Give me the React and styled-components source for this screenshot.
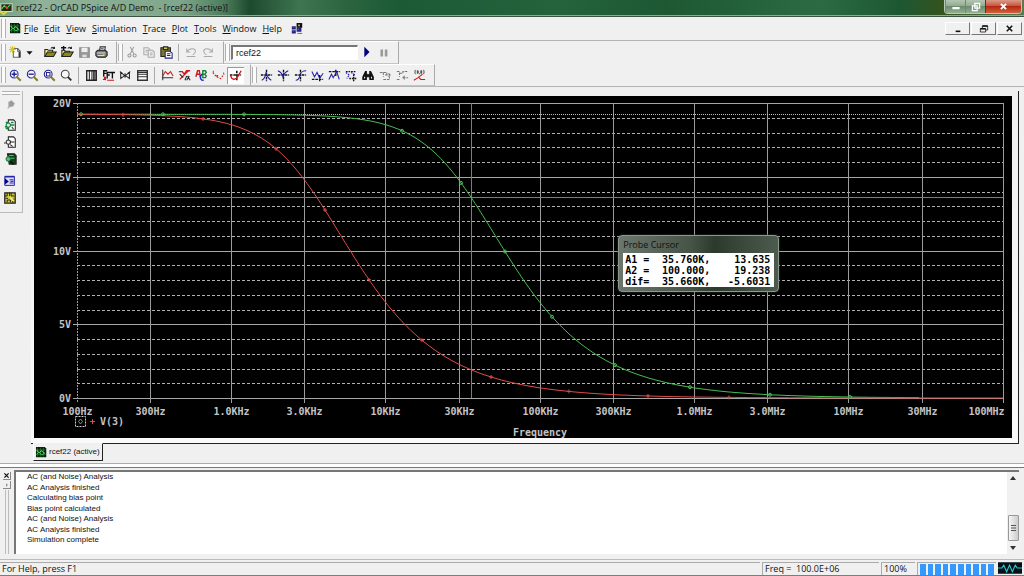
// DEPENDENCIES
import React, { Fragment } from 'react';
import styled, { createGlobalStyle } from 'styled-components';

// GLOBAL
const GlobalStyle = createGlobalStyle`
	* {
		box-sizing: border-box;
	}
	body {
		margin: 0;
		background: #f0f0f0;
		color: #111;
		font-family: "Open Sans", "Noto Sans", sans-serif;
		font-size: 9px;
		line-height: 12px;
	}
	button, input {
		font: inherit;
		color: inherit;
	}
	button {
		padding: 0;
		border: 0;
		background: none;
	}
	ul {
		margin: 0;
		padding: 0;
		list-style: none;
	}
`

// STYLED COMPONENTS
const Window = styled.div`
	display: flex;
	flex-direction: column;
	min-height: 100vh;
	background: #f0f0f0;
`

const TitleBar = styled.header`
	display: flex;
	align-items: center;
	height: 17px;
	border-bottom: 1px solid #3d5143;
	box-shadow: inset 0 -1px 0 #8cab93;
	background: linear-gradient(90deg, #76a183 0, #8fb39a 40px, #7fa78b 180px, #4c7c5c 225px, #1d4a2e 250px, #3f7550 300px, #2b6540 345px, #1b5a34 400px, #24633c 55%, #1d5833 65%, #2b6b43 80%, #1d5732 88%, #35531f 92%, #577a52 100%);
`

const Title = styled.h1`
	flex: 1;
	display: flex;
	align-items: center;
	gap: 3px;
	margin: 0;
	font-size: 9px;
	font-weight: 400;
	line-height: 14px;
	white-space: pre;
`

const WindowButtons = styled.div`
	display: flex;
	align-self: flex-start;
	height: 14px;
	margin-right: 2px;
	border: 1px solid #b9c9b9;
	border-top: 0;
	border-radius: 0 0 4px 4px;
	overflow: hidden;
`

const WindowButton = styled.button`
	display: flex;
	align-items: center;
	justify-content: center;
	width: ${props => props.$close ? 36 : 20}px;
	border-left: 1px solid ${props => props.$close ? '#6e2a1c' : '#6f8a71'};
	background: ${props => props.$close
		? 'linear-gradient(#d99a8a, #c8563c 45%, #b32a10 50%, #d2603f)'
		: 'linear-gradient(#b4c6b2, #93ab92 45%, #6c8b6d 50%, #93ae90)'};
`

const MenuBar = styled.nav`
	display: flex;
	align-items: center;
	gap: 3px;
	height: 24px;
	padding: 0 2px 0 0;
	border-bottom: 1px solid #b4b4b4;
`

const MenuItems = styled.div`
	display: flex;
	gap: 6px;
	margin-right: 6px;
`

const MenuItem = styled.button`
	font-size: 9px;
	line-height: 14px;
	&::first-letter {
		text-decoration: underline;
	}
`

const ChildButtons = styled.div`
	display: flex;
	gap: 1px;
	margin-left: auto;
`

const ChildButton = styled.button`
	display: flex;
	align-items: center;
	justify-content: center;
	width: 25px;
	height: 13px;
	border: 1px solid #fff;
	border-right-color: #777;
	border-bottom-color: #777;
`

const ToolRow = styled.div`
	display: flex;
	height: 23px;
	&:last-of-type {
		border-bottom: 1px solid #b4b4b4;
	}
`

const ToolGroup = styled.div`
	display: flex;
	align-items: center;
	padding-right: 6px;
	border-right: 1px solid #aaa;
	border-bottom: 1px solid #c4c4c4;
	border-top: 1px solid #fff;
`

const Grip = styled.span`
	flex: none;
	align-self: ${props => props.$wide ? 'auto' : 'stretch'};
	width: ${props => props.$wide ? 'auto' : '5px'};
	height: ${props => props.$wide ? '4px' : 'auto'};
	margin: ${props => props.$wide ? '0 2px 1px' : '2px 1px'};
	border: 1px solid #b0b0b0;
	border-width: ${props => props.$wide ? '1px 0' : '0 1px'};
	background: #fbfbfb;
`

const Divider = styled.span`
	flex: none;
	width: 1px;
	height: ${props => props.$blank ? 0 : 17}px;
	margin: 0 4px 0 3px;
	background: #aaa;
`

const ToolButton = styled.button`
	display: flex;
	align-items: center;
	justify-content: center;
	width: ${props => props.$narrow ? 10 : 17}px;
	height: 17px;
	background: ${props => props.$pressed ? '#fff' : 'none'};
	box-shadow: ${props => props.$pressed ? 'inset 1px 1px 0 #999' : 'none'};
`

const Svg = styled.svg`
	display: block;
	flex: none;
	fill: none;
	stroke-width: 1.2;
	overflow: visible;
`

const NameInput = styled.input`
	width: 127px;
	height: 15px;
	padding: 0 3px;
	border: 1px solid #fff;
	border-top: 2px solid #777;
	border-left: 2px solid #777;
	background: #fff;
	font: 9px/12px "Liberation Sans", sans-serif;
	outline: 0;
`

const Workspace = styled.main`
	display: flex;
	align-items: flex-start;
	gap: 8px;
	padding: 4px 5px 0 0;
`

const SideBar = styled.div`
	display: flex;
	flex-direction: column;
	align-items: stretch;
	flex: none;
	width: 23px;
	height: 122px;
	border-right: 1px solid #bbb;
	border-bottom: 1px solid #bbb;
	& > button {
		width: 20px;
		height: 17px;
	}
	& > .gap {
		margin-top: 4px;
	}
`

const Document = styled.section`
	flex: 1;
	min-width: 0;
`

const PlotFrame = styled.div`
	position: relative;
	padding: 5px 6px 5px 3px;
	border-right: 1px solid #222;
	border-bottom: 1px solid #222;
	background: linear-gradient(#f0f0f0, #fafafa);
`

const Chart = styled.svg`
	display: block;
	width: 100%;
	background: #000;
	fill: none;
	& text {
		fill: #c4c4c4;
		font: bold 10px "DejaVu Sans Mono", "Liberation Mono", monospace;
	}
`

const ProbeWindow = styled.aside`
	position: absolute;
	left: 59.5%;
	top: 144px;
	padding: 0 4px 4px;
	border: 1px solid #8b988c;
	border-radius: 4px;
	background: linear-gradient(90deg, #6c766d, #465347 45%, #2c3a2e 60%, #4d5a4e);
	box-shadow: 0 0 2px #444;
`

const ProbeTitle = styled.h2`
	margin: 0;
	color: #0c120c;
	font-size: 9px;
	font-weight: 400;
	line-height: 17px;
`

const ProbeTable = styled.table`
	width: 151px;
	padding-top: 1px;
	border-spacing: 0;
	table-layout: fixed;
	background: #fff;
	color: #000;
	font: bold 10px/11px "DejaVu Sans Mono", "Liberation Mono", monospace;
	& th, & td {
		padding: 0 0 0 2px;
		font-weight: 700;
		text-align: left;
		white-space: pre;
	}
	& td {
		text-align: right;
	}
	& td:last-child {
		width: 64px;
		padding-right: 4px;
	}
	& th {
		width: 30px;
	}
`

const DocTab = styled.button`
	display: flex;
	align-items: center;
	gap: 2px;
	height: 18px;
	margin-left: 2px;
	margin-top: -1px;
	position: relative;
	padding: 0 2px;
	border: 1px solid #222;
	border-top-color: #f0f0f0;
	border-left-color: #fff;
	background: #f0f0f0;
	font: 8px/12px "Liberation Sans", sans-serif;
`

const OutputPane = styled.section`
	display: flex;
	flex: 1;
	margin-top: 2px;
	padding: 6px 5px 5px 0;
	border-top: 1px solid #aaa;
	border-bottom: 1px solid #bbb;
	background: linear-gradient(#fff 3px, #777 3px, #777 4px, #f0f0f0 4px);
`

const OutputHandle = styled.div`
	display: flex;
	flex-direction: column;
	align-items: center;
	gap: 1px;
	width: 14px;
	padding-top: 2px;
	& > button {
		display: flex;
		align-items: center;
		justify-content: center;
		width: 8px;
		height: 8px;
		border-right: 1px solid #888;
		border-bottom: 1px solid #888;
	}
	& > span {
		flex: 1;
		width: 4px;
		border: 1px solid #bbb;
		border-width: 0 1px;
	}
`

const LogList = styled.ul`
	display: flex;
	flex: 1;
	flex-direction: column;
	justify-content: space-between;
	padding: 0 11px 9px;
	border-top: 2px solid #777;
	border-left: 2px solid #777;
	background: #fff;
	font: 8px/10px "Liberation Sans", sans-serif;
`

const ScrollBar = styled.div`
	display: flex;
	flex-direction: column;
	align-items: center;
	width: 12px;
	padding: 4px 0;
	border-top: 2px solid #777;
	background: #f1f1f1;
`

const Thumb = styled.span`
	display: flex;
	align-items: center;
	justify-content: center;
	width: 11px;
	height: 26px;
	margin: auto 0 5px;
	border: 1px solid #999;
	border-radius: 1px;
	background: linear-gradient(90deg, #f5f5f5, #ccc);
`

const StatusBar = styled.footer`
	display: flex;
	align-items: stretch;
	gap: 2px;
	height: 16px;
	padding: 2px 2px 0 0;
	border-bottom: 1px solid #6d8571;
`

const StatusCell = styled.span`
	flex: ${props => props.$width ? 'none' : 1};
	width: ${props => props.$width ? props.$width + 'px' : 'auto'};
	padding-left: 2px;
	border-top: 1px solid #aaa;
	border-left: ${props => props.$width ? '1px solid #aaa' : 0};
	line-height: 12px;
	white-space: pre;
`

const Progress = styled.div`
	display: flex;
	flex: none;
	gap: 2px;
	width: 79px;
	padding: 1px 2px 0;
	border-top: 1px solid #aaa;
	border-left: 1px solid #aaa;
`

const Block = styled.span`
	flex: 1;
	background: #3399ff;
`

// ICONS
const traceTile = (
	<Fragment>
		<path d="M0 0h12l2 2v12H0z" fill="#061f0c" />
		<path d="M2 1v12M6 1v12M10 1v12M0 4h13M0 10h13" stroke="#147a30" />
		<path d="M1 4l3 4 4-3 4 4" stroke="#e4dc28" />
		<path d="M1 10l3-3 4 4 4-3" stroke="#39d353" />
	</Fragment>
)

const magnifier = <path d="M8.5 8.5l5 5" stroke="#8a7a1c" strokeWidth="2.4" />

const axes = <path d="M1 7h13M7.500 1v13" stroke="#111" strokeWidth="1.600" strokeDasharray="3 1" />

const icons = {
	app: (
		<Fragment>
			<path d="M1 2h13v9H1z" fill="#1b2b16" stroke="#d9d9b8" />
			<path d="M2 8l3-4 3 3 4-4" stroke="#4fe25e" />
			<path d="M0 11l4 3 4-3" stroke="#e8d832" strokeWidth="2" />
			<path d="M6 5l3 3" stroke="#e23b2a" strokeWidth="2" />
		</Fragment>
	),
	trace: traceTile,
	layout: (
		<Fragment>
			<path d="M1 4h5v4H1zM1 9h5v4H1zM7 6h6v5H7z" fill="#24247e" />
			<path d="M7 0h7v6H7z" fill="#111" />
			<path d="M9 2h2v2H9z" fill="#d8c83a" />
			<path d="M2 5h2M2 10h2M8 8h2M8 13h6" stroke="#5a60b8" />
		</Fragment>
	),
	newDoc: (
		<Fragment>
			<path d="M5 3h5l3 3v7H5z" fill="#fff" stroke="#666" />
			<path d="M10 3v3h3" stroke="#555" />
			<path d="M4 0v8M0 4h8M1 1l6 6M7 1L1 7" stroke="#d8c81c" />
			<path d="M12 7v6" stroke="#333" strokeWidth="2" />
		</Fragment>
	),
	caret: <path d="M4 6h7l-3.500 4z" fill="#111" />,
	open: (
		<Fragment>
			<path d="M1 12V4h3l1 1h5v2" fill="#f5ec7a" stroke="#222" />
			<path d="M1 12l3-5h10l-3 5z" fill="#8a8a12" stroke="#222" />
			<path d="M8 3c1-2 3-2 4 0M12 1v2h-2" stroke="#222" />
		</Fragment>
	),
	append: (
		<Fragment>
			<path d="M1 12V5h3l1 1h5v1" fill="#f5ec7a" stroke="#222" />
			<path d="M1 12l3-5h10l-3 5z" fill="#8a8a12" stroke="#222" />
			<path d="M3 0v5M0 2h6" stroke="#111" strokeWidth="1.600" />
			<path d="M8 3c1-2 3-2 4 0M12 1v2h-2" stroke="#222" />
		</Fragment>
	),
	save: (
		<Fragment>
			<path d="M2 2h11v11H2z" fill="#999" stroke="#888" />
			<path d="M4 2h7v5H4z" fill="#eee" />
			<path d="M5 10h5v3H5z" fill="#ddd" />
		</Fragment>
	),
	print: (
		<Fragment>
			<path d="M5 6l1-5h6l-1 5z" fill="#fff" stroke="#333" />
			<path d="M6 3h4M6 5h4" stroke="#777" />
			<path d="M1 7l2-2h9l2 2v4l-2 2H3l-2-2z" fill="#777" stroke="#222" />
			<path d="M2 8h10M3 11h8" stroke="#ddd" />
			<path d="M9 10h2" stroke="#d6c71c" />
		</Fragment>
	),
	cut: (
		<Fragment>
			<path d="M5 1l4 8M9 1L5 9" stroke="#999" />
			<circle cx="4" cy="11" r="1.800" stroke="#999" />
			<circle cx="10" cy="11" r="1.800" stroke="#999" />
		</Fragment>
	),
	copy: (
		<Fragment>
			<path d="M1 2h5l2 2v6H1z" fill="#eee" stroke="#aaa" />
			<path d="M6 5h5l2 2v6H6z" fill="#eee" stroke="#aaa" />
			<path d="M3 5h3M3 7h2M8 8h3M8 10h3" stroke="#aaa" />
		</Fragment>
	),
	paste: (
		<Fragment>
			<path d="M1 2h11v10H1z" fill="#77762a" stroke="#222" />
			<path d="M4 1h5v3H4z" fill="#d9d05a" stroke="#222" />
			<path d="M6 6h5l3 2v6H6z" fill="#fff" stroke="#22227c" />
			<path d="M8 9h4M8 11h4" stroke="#22227c" />
		</Fragment>
	),
	undo: <path d="M2 3v4h4M2 7c3-5 10-5 10-1 0 2-1 3-3 4M2 12h10" stroke="#aaa" />,
	redo: <path d="M12 3v4H8M12 7C9 2 2 2 2 6c0 2 1 3 3 4M2 12h10" stroke="#aaa" />,
	run: <path d="M5 1l6 6-6 6z" fill="#00007f" />,
	pause: <path d="M4 4h3v8H4zM9 4h3v8H9z" fill="#9a9a9a" />,
	zoomIn: (
		<Fragment>
			<circle cx="6" cy="6" r="4.500" stroke="#24248c" fill="#f5f5ff" />
			<path d="M3 6h6M6 3v6" stroke="#24248c" strokeWidth="1.600" />
			{magnifier}
		</Fragment>
	),
	zoomOut: (
		<Fragment>
			<circle cx="6" cy="6" r="4.500" stroke="#24248c" fill="#f5f5ff" />
			<path d="M3 6h6" stroke="#24248c" strokeWidth="1.600" />
			{magnifier}
		</Fragment>
	),
	zoomArea: (
		<Fragment>
			<circle cx="6" cy="6" r="4.500" stroke="#24248c" fill="#f5f5ff" />
			<path d="M4 4h4v4H4z" stroke="#24248c" />
			{magnifier}
		</Fragment>
	),
	zoomFit: (
		<Fragment>
			<circle cx="6" cy="6" r="4.500" stroke="#444" fill="#f8f8f8" />
			<path d="M9 9l4 4" stroke="#222" strokeWidth="2" />
		</Fragment>
	),
	logX: (
		<Fragment>
			<path d="M2 2h11v11H2z" fill="#fff" stroke="#222" strokeWidth="1.600" />
			<path d="M5 2v11M8 2v11M10 2v11M11.500 2v11" stroke="#222" />
		</Fragment>
	),
	fourier: (
		<Fragment>
			<path d="M2 9V2h4M2 5h3M6 11V4h4M6 7h3M9 4h6M12 4v7" stroke="#111" strokeWidth="1.600" />
			<path d="M1 12h2V9M4 13V9M6 13h8" stroke="#d01818" strokeWidth="1.400" />
		</Fragment>
	),
	performance: (
		<Fragment>
			<path d="M2 4v7l5-4 5 4V4L7 8z" stroke="#222" />
			<path d="M1 3l3 2M13 3l-3 2M7 5v5" stroke="#222" />
		</Fragment>
	),
	logY: (
		<Fragment>
			<path d="M2 2h11v11H2z" fill="#fff" stroke="#333" strokeWidth="1.600" />
			<path d="M2 4h11M2 6h11M2 9h11" stroke="#333" />
		</Fragment>
	),
	addTrace: (
		<Fragment>
			<path d="M2 1v12M1 10h13" stroke="#333" />
			<path d="M2 8l3-5 3 3 3-3 3 5" stroke="#d01818" />
		</Fragment>
	),
	evalGoal: (
		<Fragment>
			<path d="M1 3h4l2 3 3-4h4M2 12l10-10" stroke="#d01818" strokeWidth="1.500" />
			<path d="M2 6l4 4M8 13l2-5M11 8l3 5M13 8l-3 5" stroke="#222" />
		</Fragment>
	),
	label: (
		<Fragment>
			<path d="M1 9l2-7h2l1 7M2 6h4" stroke="#d01818" strokeWidth="1.600" />
			<path d="M10 6c-5-1-5 8 0 7" stroke="#1c2fc8" strokeWidth="1.800" />
			<path d="M9 2h3l1 2-2 2 2 2-1 2H9z" stroke="#16803a" strokeWidth="1.600" />
		</Fragment>
	),
	marks: (
		<Fragment>
			<path d="M1 4l4 5 5 2 4-5" stroke="#d01818" strokeDasharray="2 1.500" />
			<path d="M1 3h1M5 8h2M13 5h1" stroke="#d01818" strokeWidth="2" />
		</Fragment>
	),
	cursor: (
		<Fragment>
			<path d="M1 7h13M9 2v11" stroke="#111" strokeWidth="1.800" strokeDasharray="3 1" />
			<path d="M2 8c1 5 6 5 8 1l4-7" stroke="#d01818" strokeWidth="1.600" />
		</Fragment>
	),
	peak: <Fragment>{axes}<path d="M2 13c4-2 4-5 5-9 1 4 2 7 6 9" stroke="#1c1ca8" /></Fragment>,
	trough: <Fragment>{axes}<path d="M1 2c3 1 5 3 6 8 1-5 3-7 6-8" stroke="#1c1ca8" /></Fragment>,
	slope: <Fragment>{axes}<path d="M2 13c4 0 4-3 5-6s2-5 7-5" stroke="#1c1ca8" /></Fragment>,
	min: (
		<Fragment>
			<path d="M1 12h13M10 7v7" stroke="#111" strokeWidth="1.600" strokeDasharray="3 1" />
			<path d="M1 3l3 6 3-5 3 7 4-6" stroke="#1c1ca8" />
		</Fragment>
	),
	max: (
		<Fragment>
			<path d="M1 3h13M9 1v8" stroke="#111" strokeWidth="1.600" strokeDasharray="3 1" />
			<path d="M1 12l3-6 2 4 4-7 3 9" stroke="#1c1ca8" />
		</Fragment>
	),
	point: (
		<Fragment>
			<path d="M1 3h12M5 11h9M10 6v8" stroke="#111" strokeWidth="1.600" strokeDasharray="2 1" />
			<path d="M1 4l4 3-3 4M7 4l5 3" stroke="#1c1ca8" strokeDasharray="2 1" />
		</Fragment>
	),
	search: (
		<Fragment>
			<path d="M4 3h1v3h4V3h1l3 6v3H9V9H5v3H1V9z" fill="#111" stroke="#111" />
			<path d="M3 9v2M11 9v2M7 4v2" stroke="#eee" />
		</Fragment>
	),
	next: <path d="M1 4h4v5M5 4h4v3M7 7h6M11 5l2 2-2 2M5 12h7V9" stroke="#777" strokeDasharray="3 1" />,
	previous: <path d="M1 3h3v6M4 5h4V3h6M8 10h6M10 8l-2 2 2 2M1 12h4" stroke="#777" strokeDasharray="3 1" />,
	coords: (
		<Fragment>
			<path d="M3 1c-1 1-1 4 0 5M12 1c1 1 1 4 0 5M5 2h1v3H5zM9 2h1v3H9zM7.500 5v1" stroke="#333" strokeWidth="1" />
			<path d="M1 13l5-3 5-4M6 9l3 3h5" stroke="#d01818" />
		</Fragment>
	),
	pin: <path d="M5 4l4-2 4 4-2 4-5 1-2 2 1-4z" fill="#999" stroke="#bbb" />,
	output: (
		<Fragment>
			<path d="M5 1h6l2 2v10H5z" fill="#fff" stroke="#222" />
			<path d="M2 4h4M1 9h5M2 11h4M8 4h3M8 7h4" stroke="#16803a" strokeWidth="1.600" />
			<circle cx="5" cy="7" r="2.500" stroke="#16803a" fill="#dfeee2" />
			<path d="M9 9l2 3" stroke="#333" />
		</Fragment>
	),
	netlist: (
		<Fragment>
			<path d="M5 1h6l2 2v10H5z" fill="#fff" stroke="#222" />
			<circle cx="5" cy="7" r="2.500" stroke="#333" fill="#eee" />
			<path d="M7 7h5M2 8H0M7 10l3 2" stroke="#222" />
		</Fragment>
	),
	circuit: (
		<Fragment>
			<path d="M4 1h8l2 2v10H6z" fill="#12401f" stroke="#222" />
			<path d="M6 3h5M7 6h5" stroke="#49c46a" />
			<circle cx="5" cy="7" r="2.600" stroke="#16803a" fill="#6fae80" />
			<path d="M7 9l4 4" stroke="#111" strokeWidth="2" />
		</Fragment>
	),
	queue: (
		<Fragment>
			<path d="M1 2h12v11H1z" fill="#dcdcf5" stroke="#2424a8" />
			<path d="M1 2h12" stroke="#2424a8" strokeWidth="2" />
			<path d="M1 4l5 4-5 4z" fill="#00007f" />
			<path d="M7 6h5M8 8h4M7 10h5" stroke="#2424a8" />
		</Fragment>
	),
	profile: (
		<Fragment>
			<path d="M1 1h13v13H1z" fill="#d2cb3a" stroke="#222" strokeWidth="1.600" />
			<path d="M1 5h3V1M7 1v4M9 1v4h4M4 13v-3h4v3M2 8h3M10 9h3M11 11v3" stroke="#222" />
			<path d="M8 7l4 4" stroke="#fff27a" strokeWidth="2" />
		</Fragment>
	),
	minimize: <path d="M3 9h9" stroke="#fff" strokeWidth="2.800" />,
	restore: <path d="M6 3h6v6H6zM3 6h6v6H3z" stroke="#fff" strokeWidth="1.600" />,
	close: <path d="M4 4l7 7M11 4l-7 7" stroke="#fff" strokeWidth="2.600" />,
	childMinimize: <path d="M4 11h7" stroke="#111" strokeWidth="2.400" />,
	childRestore: (
		<Fragment>
			<path d="M5 6V3h8v6h-3M2 7h8v5H2z" stroke="#111" />
			<path d="M5 3h8M2 7h8" stroke="#111" strokeWidth="2.200" />
		</Fragment>
	),
	childClose: <path d="M3 3l9 9M12 3l-9 9" stroke="#111" strokeWidth="2.600" />
}

function Icon({ name, size = 13 }) {
	return (
		<Svg width={size} height={size} viewBox="0 0 15 15" aria-hidden="true">
			{icons[name]}
		</Svg>
	);
}

// DATA
const menus = ['File', 'Edit', 'View', 'Simulation', 'Trace', 'Plot', 'Tools', 'Window', 'Help']

const viewTools = [
	['zoomIn', 'Zoom in'], ['zoomOut', 'Zoom out'], ['zoomArea', 'Zoom area'], ['zoomFit', 'Zoom fit'],
	null,
	['logX', 'Log X axis'], ['fourier', 'Fourier'], ['performance', 'Performance analysis'], ['logY', 'Log Y axis'],
	null,
	['addTrace', 'Add trace'], ['evalGoal', 'Evaluate goal function'], ['label', 'Text label'],
	['marks', 'Mark data points'], ['cursor', 'Toggle cursor', true]
]

const cursorTools = [
	['peak', 'Cursor peak'], ['trough', 'Cursor trough'], ['slope', 'Cursor slope'], ['min', 'Cursor min'],
	['max', 'Cursor max'], ['point', 'Cursor point'], ['search', 'Cursor search'],
	['next', 'Next transition'], ['previous', 'Previous transition'], ['coords', 'Mark label']
]

const fileTools = [['open', 'Open'], ['append', 'Append file'], ['save', 'Save'], ['print', 'Print']]

const editTools = [['cut', 'Cut'], ['copy', 'Copy'], ['paste', 'Paste'], null, ['undo', 'Undo'], ['redo', 'Redo']]

const probeRows = [
	['A1 =', '35.760K,', '13.635'],
	['A2 =', '100.000,', '19.238'],
	['dif=', '35.660K,', '-5.6031']
]

const logLines = [
	'AC (and Noise) Analysis',
	'AC Analysis finished',
	'Calculating bias point',
	'Bias point calculated',
	'AC (and Noise) Analysis',
	'AC Analysis finished',
	'Simulation complete'
]

const ticks = [
	[1e2, '100Hz'], [3e2, '300Hz'], [1e3, '1.0KHz'], [3e3, '3.0KHz'], [1e4, '10KHz'], [3e4, '30KHz'],
	[1e5, '100KHz'], [3e5, '300KHz'], [1e6, '1.0MHz'], [3e6, '3.0MHz'], [1e7, '10MHz'], [3e7, '30MHz'], [1e8, '100MHz']
]

// PLOT GEOMETRY
const left = 43
const right = 969
const bottom = 302
const top = 7
const decade = (right - left) / 6

const xOf = freq => left + (Math.log10(freq) - 2) * decade
const yOf = volts => bottom - volts * (bottom - top) / 20
const freqAt = x => Math.pow(10, 2 + (x - left) / decade)

// first order low pass response
const response = (x, corner) => 19.238 / Math.sqrt(1 + Math.pow(freqAt(x) / corner, 2))

const curve = (corner, end) => {
	const points = []
	for (let x = left; x <= end; x += 2) {
		points.push(x + ',' + yOf(response(x, corner)).toFixed(1))
	}
	return points.join(' ')
}

const greenMarks = [47, 129, 210, 368, 427, 471, 518, 581, 656, 736, 816]
const redMarks = [89, 169, 242, 291, 335, 388, 457, 535, 614, 695]

function Tools({ items }) {
	return items.map((item, i) => item
		? (
			<ToolButton key={i} aria-label={item[1]} title={item[1]} $pressed={item[2]}>
				<Icon name={item[0]} />
			</ToolButton>
		)
		: <Divider key={i} />
	);
}

function Plot() {
	const rows = Array.from({ length: 21 }, (_, v) => v)

	return (
		<Chart viewBox="0 0 978 342" role="img" aria-label="Frequency response of V(3)">
			{rows.map(v => v % 5 === 0
				? <path key={v} d={`M${left - 4} ${Math.round(yOf(v)) + 0.5}H${right}`} stroke="#a6a6a6" />
				: <path key={v} d={`M${left} ${Math.round(yOf(v)) + 0.5}H${right}`} stroke="#b0b0b0" strokeDasharray="3 2" />
			)}
			{ticks.map(([freq, label], i) => {
				const x = Math.floor(xOf(freq)) + 0.5
				return (
					<Fragment key={label}>
						<path d={`M${x} ${top}V${bottom + 5}`} stroke="#9c9c9c" strokeDasharray={i ? 'none' : '2 1'} />
						<text x={i === 12 ? x + 1 : x} y={319} textAnchor={i === 12 ? 'end' : 'middle'}>{label}</text>
					</Fragment>
				)
			})}
			{[0, 5, 10, 15, 20].map(v => (
				<text key={v} x={left - 6} y={Math.round(yOf(v)) + 4} textAnchor="end">{v}V</text>
			))}
			<path d={`M${left} 101.500H${right}M437.500 ${top}V${bottom}`} stroke="#7c7c7c" />
			<path d={`M${left} 18.500H${right}`} stroke="#c0c0c0" strokeDasharray="1 1" />

			<polyline points={curve(35760, 886)} stroke="#48bd50" />
			<polyline points={curve(3576, right)} stroke="#e04a48" />
			{redMarks.map(x => (
				<path key={x} d={`M${x - 2} ${yOf(response(x, 3576))}h4m-2 -2v4`} stroke="#e04a48" />
			))}
			{greenMarks.map(x => (
				<circle key={x} cx={x} cy={yOf(response(x, 35760))} r="1.500" stroke="#48bd50" />
			))}

			<rect x="41.500" y="320.500" width="10" height="10" stroke="#d0d0d0" strokeDasharray="2 1" />
			<path d="M46.500 323l2 2.500-2 2.500-2-2.500z" stroke="#48bd50" />
			<path d="M56 325.500h5M58.500 323v5" stroke="#e04a48" />
			<text x="66" y="329">V(3)</text>
			<text x="506" y="340" textAnchor="middle">Frequency</text>
		</Chart>
	);
}

function Probe() {
	return (
		<ProbeWindow>
			<ProbeTitle>Probe Cursor</ProbeTitle>
			<ProbeTable>
				<tbody>
					{probeRows.map(row => (
						<tr key={row[0]}>
							<th scope="row">{row[0]}</th>
							<td>{row[1]}</td>
							<td>{row[2]}</td>
						</tr>
					))}
				</tbody>
			</ProbeTable>
		</ProbeWindow>
	);
}

export default function App() {
	return (
		<Fragment>
			<GlobalStyle />
			<Window>
				<TitleBar>
					<Title>
						<Icon name="app" />
						{'rcef22 - OrCAD PSpice A/D Demo  - [rcef22 (active)]'}
					</Title>
					<WindowButtons>
						<WindowButton aria-label="Minimize"><Icon name="minimize" size={12} /></WindowButton>
						<WindowButton aria-label="Restore"><Icon name="restore" size={12} /></WindowButton>
						<WindowButton aria-label="Close" $close><Icon name="close" size={11} /></WindowButton>
					</WindowButtons>
				</TitleBar>

				<MenuBar>
					<Grip />
					<Icon name="trace" size={11} />
					<MenuItems>
						{menus.map(menu => <MenuItem key={menu}>{menu}</MenuItem>)}
					</MenuItems>
					<Icon name="layout" size={12} />
					<ChildButtons>
						<ChildButton aria-label="Minimize document"><Icon name="childMinimize" size={10} /></ChildButton>
						<ChildButton aria-label="Restore document"><Icon name="childRestore" size={10} /></ChildButton>
						<ChildButton aria-label="Close document"><Icon name="childClose" size={9} /></ChildButton>
					</ChildButtons>
				</MenuBar>

				<ToolRow>
					<ToolGroup>
						<Grip />
						<ToolButton aria-label="New"><Icon name="newDoc" /></ToolButton>
						<ToolButton aria-label="New options" $narrow><Icon name="caret" /></ToolButton>
						<Divider $blank />
						<Tools items={fileTools} />
					</ToolGroup>
					<ToolGroup>
						<Grip />
						<Tools items={editTools} />
					</ToolGroup>
					<ToolGroup>
						<Grip />
						<NameInput aria-label="Simulation profile" defaultValue="rcef22" />
						<ToolButton aria-label="Run"><Icon name="run" /></ToolButton>
						<ToolButton aria-label="Pause"><Icon name="pause" /></ToolButton>
					</ToolGroup>
				</ToolRow>
				<ToolRow>
					<ToolGroup>
						<Grip />
						<Tools items={viewTools} />
					</ToolGroup>
					<ToolGroup>
						<Grip />
						<Tools items={cursorTools} />
					</ToolGroup>
				</ToolRow>

				<Workspace>
					<SideBar>
						<Grip $wide />
						<ToolButton aria-label="Pin"><Icon name="pin" size={11} /></ToolButton>
						<ToolButton className="gap" aria-label="View output file"><Icon name="output" /></ToolButton>
						<ToolButton aria-label="View netlist"><Icon name="netlist" /></ToolButton>
						<ToolButton aria-label="View circuit"><Icon name="circuit" /></ToolButton>
						<ToolButton className="gap" aria-label="Simulation queue"><Icon name="queue" size={12} /></ToolButton>
						<ToolButton aria-label="Edit profile"><Icon name="profile" size={12} /></ToolButton>
					</SideBar>
					<Document>
						<PlotFrame>
							<Plot />
							<Probe />
						</PlotFrame>
						<DocTab>
							<Icon name="trace" size={11} />
							rcef22 (active)
						</DocTab>
					</Document>
				</Workspace>

				<OutputPane>
					<OutputHandle>
						<button aria-label="Close output"><Icon name="childClose" size={7} /></button>
						<button aria-label="Expand output">
							<Svg width="4" height="4" viewBox="0 0 4 4"><path d="M1 0l2 2-2 2z" fill="#999" /></Svg>
						</button>
						<span />
					</OutputHandle>
					<LogList>
						{logLines.map((line, i) => <li key={i}>{line}</li>)}
					</LogList>
					<ScrollBar>
						<Svg width="6" height="4" viewBox="0 0 6 4"><path d="M0 4l3-4 3 4z" fill="#333" /></Svg>
						<Thumb>
							<Svg width="5" height="6" viewBox="0 0 5 6"><path d="M0 .5h5M0 3h5M0 5.500h5" stroke="#555" /></Svg>
						</Thumb>
						<Svg width="6" height="4" viewBox="0 0 6 4"><path d="M0 0l3 4 3-4z" fill="#333" /></Svg>
					</ScrollBar>
				</OutputPane>

				<StatusBar>
					<StatusCell>For Help, press F1</StatusCell>
					<StatusCell $width={117}>{'Freq =  100.0E+06'}</StatusCell>
					<StatusCell $width={34}>100%</StatusCell>
					<Progress role="progressbar" aria-label="Simulation progress" aria-valuenow={100}>
						{Array.from({ length: 10 }, (_, i) => <Block key={i} />)}
					</Progress>
					<Svg width="24" height="12" viewBox="0 0 25 12">
						<path d="M0 0h25v12H0z" fill="#06101a" />
						<path d="M0 6h4l2-3 3 7 3-7 3 7 3-7 2 3h5" stroke="#2fc4c0" />
					</Svg>
				</StatusBar>
			</Window>
		</Fragment>
	);
}
